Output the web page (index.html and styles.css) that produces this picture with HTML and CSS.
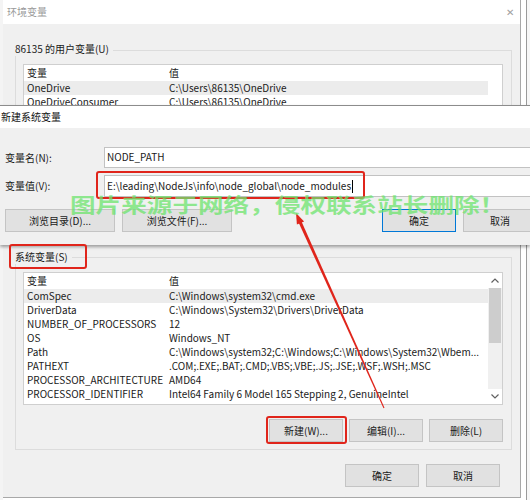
FILE: index.html
```html
<!DOCTYPE html>
<html>
  <head>
    <meta charset="utf-8">
    <link rel="stylesheet" href="styles.css">
  </head>
  <body>
    <div class="screen">
      <div class="behind-left"></div>
      <div class="env">
        <div class="env-title"><span>环境变量</span><span class="close">✕</span></div>
        <div class="group user-group">
          <div class="group-label">86135 的用户变量(U)</div>
          <div class="list">
            <div class="rows">
              <div class="row head"><span>变量</span><span>值</span></div>
              <div class="row sel"><span>OneDrive</span><span>C:\Users\86135\OneDrive</span></div>
              <div class="row"><span>OneDriveConsumer</span><span>C:\Users\86135\OneDrive</span></div>
              <div class="row"><span>Path</span><span>C:\Users\86135\AppData\Local\Microsoft\WindowsApps</span></div>
            </div>
            <div class="scroll-blank"></div>
          </div>
        </div>
        <div class="group sys-group">
          <div class="group-label">系统变量(S)</div>
          <div class="list sys-list">
            <div class="rows">
              <div class="row head"><span>变量</span><span>值</span></div>
              <div class="row sel"><span>ComSpec</span><span>C:\Windows\system32\cmd.exe</span></div>
              <div class="row"><span>DriverData</span><span>C:\Windows\System32\Drivers\DriverData</span></div>
              <div class="row"><span>NUMBER_OF_PROCESSORS</span><span>12</span></div>
              <div class="row"><span>OS</span><span>Windows_NT</span></div>
              <div class="row"><span>Path</span><span>C:\Windows\system32;C:\Windows;C:\Windows\System32\Wbem...</span></div>
              <div class="row"><span>PATHEXT</span><span>.COM;.EXE;.BAT;.CMD;.VBS;.VBE;.JS;.JSE;.WSF;.WSH;.MSC</span></div>
              <div class="row"><span>PROCESSOR_ARCHITECTURE</span><span>AMD64</span></div>
              <div class="row"><span>PROCESSOR_IDENTIFIER</span><span>Intel64 Family 6 Model 165 Stepping 2, GenuineIntel</span></div>
            </div>
            <div class="scrollbar">
              <div class="arrow-btn">
                <svg width="8" height="5" viewBox="0 0 8 5"><path d="M0.5 4.5 L4 1 L7.5 4.5" fill="none" stroke="#606060" stroke-width="1.2"/></svg>
              </div>
              <div class="thumb"></div>
              <div class="track"></div>
              <div class="arrow-btn">
                <svg width="8" height="5" viewBox="0 0 8 5"><path d="M0.5 0.5 L4 4 L7.5 0.5" fill="none" stroke="#606060" stroke-width="1.2"/></svg>
              </div>
            </div>
          </div>
          <div class="btn-row sys-buttons">
            <button class="btn">新建(W)...</button>
            <button class="btn">编辑(I)...</button>
            <button class="btn">删除(L)</button>
          </div>
        </div>
        <div class="btn-row footer">
          <button class="btn">确定</button>
          <button class="btn">取消</button>
        </div>
      </div>
      <div class="behind-right"></div>
    </div>

    <div class="newvar">
      <div class="newvar-title">新建系统变量</div>
      <div class="newvar-body">
        <div class="field">
          <label class="field-label">变量名(N):</label>
          <div class="input">NODE_PATH</div>
        </div>
        <div class="field second">
          <label class="field-label">变量值(V):</label>
          <div class="input tall">E:\leading\NodeJs\info\node_global\node_modules<span class="caret"></span></div>
        </div>
        <div class="newvar-buttons">
          <button class="btn wide">浏览目录(D)...</button>
          <button class="btn wide">浏览文件(F)...</button>
          <button class="btn default">确定</button>
          <button class="btn">取消</button>
        </div>
      </div>
    </div>

    <div class="mark mark-input"></div>
    <div class="mark mark-label"></div>
    <div class="mark mark-new"></div>

    <svg class="pointer" width="530" height="500" viewBox="0 0 530 500">
      <polygon points="298.7,222.7 301.5,221.5 384.5,407.8 383.5,408.2" fill="#e0251b"/>
      <polygon points="296,213 296.9,224.6 304.1,221.4" fill="#e0251b"/>
    </svg>

    <div class="watermark">图片来源于网络，侵权联系站长删除！</div>
  </body>
</html>
```

FILE: styles.css
```css
html, body {
  margin: 0;
  padding: 0;
  width: 530px;
  height: 500px;
  overflow: hidden;
  background: #fff;
  font-family: "Noto Sans CJK SC", "Noto Sans", sans-serif;
  font-size: 10px;
  line-height: 14px;
  color: #1a1a1a;
}

.screen {
  display: flex;
  height: 500px;
}

.behind-left {
  width: 3px;
  background: #f4f4f4;
}

.behind-right {
  flex: 1;
  border-left: 5px solid #fff;
  box-shadow: inset 1px 0 0 #9a9a9a;
  background: #f7f7f7;
}

.env {
  width: 517px;
  height: 497px;
  background: #f0f0f0;
  border-right: 1px solid #a8a8a8;
  border-bottom: 1px solid #a8a8a8;
}

.env-title {
  height: 24px;
  line-height: 24px;
  background: #fff;
  color: #9a9a9a;
  padding-left: 4px;
  display: flex;
  justify-content: space-between;
}

.close {
  font-size: 10px;
  color: #a0a0a0;
  padding-right: 6px;
}

.group {
  border: 1px solid #dcdcdc;
  margin: 0 8px 0 12px;
}

.user-group {
  margin-top: 26px;
  height: 186px;
  box-sizing: border-box;
}

.sys-group {
  margin-top: 21px;
}

.group-label {
  width: max-content;
  height: 14px;
  margin: -9px 0 0 -1px;
  padding-right: 4px;
  background: #f0f0f0;
}

.sys-group .group-label {
  margin-top: -8px;
}

.list {
  display: flex;
  margin: 8px 0 0 7px;
  width: 480px;
  background: #fff;
  border: 1px solid #cfcfcf;
  box-sizing: border-box;
}

.sys-list {
  height: 133px;
}

.rows {
  width: 464px;
}

.row {
  display: grid;
  grid-template-columns: 142px 1fr;
  padding-left: 3px;
  height: 14px;
  white-space: nowrap;
  overflow: hidden;
}

.row.head {
  height: 16px;
  line-height: 15px;
}

.row.sel {
  background: #ececec;
}

.scroll-blank {
  flex: 1;
}

.scrollbar {
  flex: 1;
  display: flex;
  flex-direction: column;
  background: #f0f0f0;
}

.arrow-btn {
  height: 15px;
  display: flex;
  align-items: center;
  justify-content: center;
  background: #fff;
}

.thumb {
  height: 55px;
  margin: 0 1px;
  background: #cdcdcd;
}

.track {
  flex: 1;
}

.btn-row {
  display: flex;
  justify-content: flex-end;
  gap: 6px;
}

.sys-buttons {
  margin: 14px 8px 0 0;
  padding-bottom: 7px;
}

.footer {
  margin: 14px 20px 0 0;
  gap: 7px;
}

.btn {
  width: 74px;
  height: 23px;
  padding: 0;
  font-family: inherit;
  font-size: 10px;
  color: #1a1a1a;
  background: #e1e1e1;
  border: 1px solid #c4c4c4;
}

.newvar {
  position: absolute;
  top: 105px;
  left: 0;
  width: 530px;
  height: 139px;
  overflow: hidden;
  background: #f0f0f0;
  border-top: 1px solid #8c8c8c;
  box-shadow: 0 2px 3px rgba(0, 0, 0, 0.35);
}

.newvar-title {
  height: 22px;
  line-height: 22px;
  background: #fff;
  padding-left: 1px;
  color: #111;
}

.newvar-body {
  padding-top: 19px;
}

.field {
  display: flex;
  align-items: center;
}

.field.second {
  margin-top: 7px;
}

.field-label {
  width: 99px;
  padding-left: 5px;
}

.input {
  flex: 1;
  height: 21px;
  line-height: 17px;
  padding-left: 2px;
  margin-right: -4px;
  background: #fff;
  border: 1px solid #c2c2c2;
  box-sizing: border-box;
  white-space: nowrap;
}

.input.tall {
  height: 22px;
  line-height: 19px;
}

.caret {
  display: inline-block;
  width: 1px;
  height: 13px;
  margin-left: 1px;
  vertical-align: -3px;
  background: #000;
}

.newvar-buttons {
  display: flex;
  gap: 7px;
  margin-top: 12px;
  padding-left: 5px;
}

.newvar-buttons .btn {
  flex: none;
}

.btn.wide {
  width: 110px;
}

.btn.default {
  margin-left: 143px;
  border: 1px solid #0078d7;
}

.mark {
  position: absolute;
  border: 2px solid #e0251b;
  border-radius: 3px;
  box-sizing: border-box;
}

.mark-input {
  left: 96px;
  top: 171px;
  width: 269px;
  height: 28px;
}

.mark-label {
  left: 9px;
  top: 244px;
  width: 78px;
  height: 25px;
}

.mark-new {
  left: 266px;
  top: 416px;
  width: 81px;
  height: 28px;
}

.pointer {
  position: absolute;
  top: 0;
  left: 0;
}

.watermark {
  position: absolute;
  left: 70px;
  top: 193px;
  font-size: 20px;
  line-height: 24px;
  font-weight: bold;
  color: rgba(110, 228, 110, 0.75);
  white-space: nowrap;
  transform: scaleX(1.28);
  transform-origin: left center;
}
```
